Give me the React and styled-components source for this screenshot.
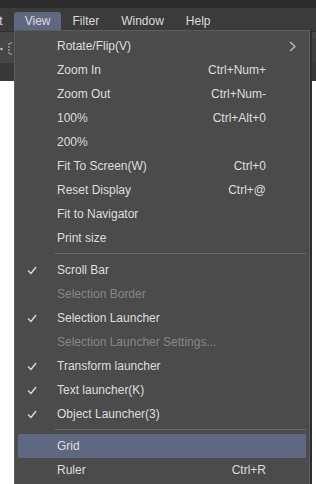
import React from "react";
import styled, { createGlobalStyle } from "styled-components";

const GlobalStyle = createGlobalStyle`
  html, body {
    margin: 0;
    padding: 0;
    background: #ffffff;
    overflow: hidden;
  }
  body {
    font-family: "Liberation Sans", Arial, sans-serif;
  }
`;

const Screen = styled.div`
  position: relative;
  width: 316px;
  height: 484px;
  overflow: hidden;
  display: flex;
  flex-direction: column;
  background: #ffffff;
`;

const TitleStrip = styled.div`
  height: 8px;
  background: #2c2c2c;
`;

const MenuBar = styled.div`
  height: 23px;
  background: #3b3b3b;
  display: flex;
  align-items: flex-end;
  border-bottom: 1px solid #2e2e2e;
`;

const BarItem = styled.div`
  height: 18px;
  line-height: 18px;
  padding: 0 11px;
  margin-bottom: 1px;
  font-size: 12px;
  color: #dcdcdc;
  border-radius: 3px 3px 0 0;
  background: ${(p) => (p.active ? "#5f6881" : "transparent")};
  margin-left: ${(p) => (p.shift ? `${p.shift}px` : "0")};
`;

const ToolBar = styled.div`
  height: 31px;
  background: #474747;
  display: flex;
  align-items: center;
  justify-content: space-between;
`;

const ToolIcons = styled.div`
  display: flex;
  align-items: center;
  gap: 3px;
  color: #bdbdbd;
`;

const RightTools = styled.div`
  align-self: stretch;
  width: 8px;
  background: #3e3e3e;
  margin-top: 6px;
`;

const DarkBand = styled.div`
  height: 18px;
  background: #393939;
`;

const Canvas = styled.div`
  flex: 1;
  background: #ffffff;
`;

const Dropdown = styled.div`
  position: absolute;
  left: 14px;
  top: 30px;
  width: 290px;
  height: 470px;
  background: #4b4b4b;
  border: 1px solid #5c5c5c;
  box-shadow: 2px 0 0 #2e2e2e;
  padding: 3px 2px 2px;
  display: flex;
  flex-direction: column;
`;

const Row = styled.div`
  height: 24px;
  flex-shrink: 0;
  display: flex;
  align-items: center;
  border-radius: 2px;
  background: ${(p) => (p.hover ? "#5f6881" : "transparent")};
  color: ${(p) => (p.disabled ? "#878787" : "#dedede")};
  font-size: 12px;
  margin: 0 1px;
`;

const CheckCell = styled.div`
  width: 39px;
  flex-shrink: 0;
  display: flex;
  justify-content: flex-end;
`;

const Label = styled.div`
  flex: 1;
  white-space: nowrap;
`;

const Shortcut = styled.div`
  flex-shrink: 0;
  text-align: right;
  margin-right: 40px;
`;

const Arrow = styled.div`
  width: 12px;
  margin-right: 8px;
  display: flex;
  justify-content: center;
`;

const Separator = styled.div`
  height: 1px;
  flex-shrink: 0;
  background: #6a6a6a;
  margin: 3px 1px 4px 38px;
`;

const Check = () => (
  <svg width="10" height="9" viewBox="0 0 10 9" style={{ marginRight: 20 }}>
    <polyline
      points="1,4.5 4,7.5 9,1"
      fill="none"
      stroke="#dcdcdc"
      strokeWidth="1.4"
    />
  </svg>
);

const items = [
  { label: "Rotate/Flip(V)", sub: true },
  { label: "Zoom In", key: "Ctrl+Num+" },
  { label: "Zoom Out", key: "Ctrl+Num-" },
  { label: "100%", key: "Ctrl+Alt+0" },
  { label: "200%" },
  { label: "Fit To Screen(W)", key: "Ctrl+0" },
  { label: "Reset Display", key: "Ctrl+@" },
  { label: "Fit to Navigator" },
  { label: "Print size" },
  { sep: true },
  { label: "Scroll Bar", checked: true },
  { label: "Selection Border", disabled: true },
  { label: "Selection Launcher", checked: true },
  { label: "Selection Launcher Settings...", disabled: true },
  { label: "Transform launcher", checked: true },
  { label: "Text launcher(K)", checked: true },
  { label: "Object Launcher(3)", checked: true },
  { sep: true },
  { label: "Grid", hover: true },
  { label: "Ruler", key: "Ctrl+R" },
];

export default function App() {
  return (
    <>
      <GlobalStyle />
      <Screen>
        <TitleStrip />
        <MenuBar>
          <BarItem shift={-29}>Edit</BarItem>
          <BarItem active>View</BarItem>
          <BarItem>Filter</BarItem>
          <BarItem>Window</BarItem>
          <BarItem>Help</BarItem>
        </MenuBar>
        <ToolBar>
          <ToolIcons>
            <svg width="14" height="14" viewBox="0 0 14 14">
              <circle cx="1.5" cy="8" r="1.3" fill="#bdbdbd" />
              <path
                d="M12 2 H9 V13 H12"
                fill="none"
                stroke="#bdbdbd"
                strokeWidth="1"
                strokeDasharray="2 1"
              />
            </svg>
          </ToolIcons>
          <RightTools />
        </ToolBar>
        <DarkBand />
        <Canvas />
        <Dropdown>
          {items.map((it, i) =>
            it.sep ? (
              <Separator key={i} />
            ) : (
              <Row key={i} hover={it.hover} disabled={it.disabled}>
                <CheckCell>{it.checked ? <Check /> : null}</CheckCell>
                <Label>{it.label}</Label>
                {it.sub ? (
                  <Arrow>
                    <svg width="7" height="11" viewBox="0 0 7 11">
                      <polyline
                        points="1,1 6,5.5 1,10"
                        fill="none"
                        stroke="#c4c4c4"
                        strokeWidth="1.2"
                      />
                    </svg>
                  </Arrow>
                ) : (
                  <Shortcut>{it.key || ""}</Shortcut>
                )}
              </Row>
            )
          )}
        </Dropdown>
      </Screen>
    </>
  );
}
